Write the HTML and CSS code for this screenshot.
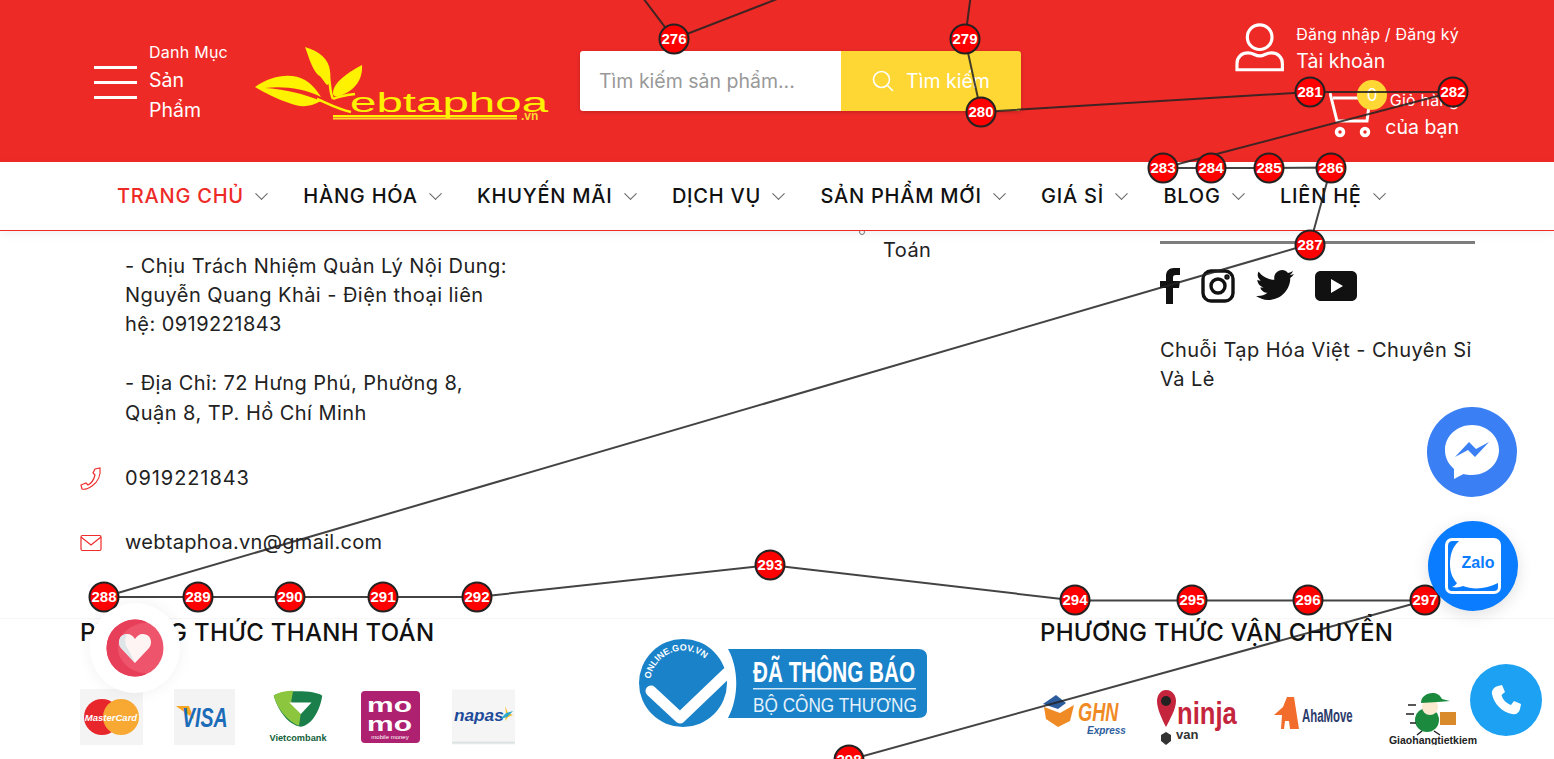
FILE: index.html
```html
<!DOCTYPE html>
<html lang="vi">
<head>
  <meta charset="UTF-8" />
  <meta name="viewport" content="width=device-width, initial-scale=1.0" />
  <title>Web Tạp Hóa</title>
  <link rel="stylesheet" href="styles.css">
</head>
<body>
<div class="page">

  <header class="top">
    <div class="cat">
      <div class="burger"><span></span><span></span><span></span></div>
      <div class="cat-text">
        <small>Danh Mục</small>
        <p>Sản<br>Phẩm</p>
      </div>
    </div>

    <svg class="logo" width="296" height="80" viewBox="0 0 296 80">
      <path fill="#fff200" d="M0 40C18 27 38 26 50 33C58 38 63 45 66 50C48 41 28 39 10 41C28 42 50 47 66 54C54 61 44 60 34 56C22 52 10 46 0 40Z"/>
      <path fill="#fff200" d="M50 0C64 4 74 12 75 24C76 32 75 37 72 38C68 34 67 30 63 28C56 20 54 10 50 0Z"/>
      <path fill="#fff200" d="M107 18C108 32 100 44 84 49C80 50 78 49 78 46C78 36 92 26 107 18Z"/>
      <path fill="none" stroke="#fff200" stroke-width="2.5" d="M72 24C76 34 74 44 78 52M62 52C72 56 82 62 96 65M78 52C82 50 92 48 100 47"/>
      <rect x="78" y="68" width="184" height="2" fill="#fff200"/>
      <rect x="78" y="70.500" width="184" height="2" fill="#ffd92e"/>
      <text class="logo-word" transform="translate(95 65) scale(1.76 1)">ebtaphoa</text>
      <text class="logo-vn" x="266" y="73">.vn</text>
    </svg>

    <form class="search">
      <input class="search-input" type="text" placeholder="Tìm kiếm sản phẩm..." />
      <button class="search-btn" type="button">
        <svg width="22" height="22" viewBox="0 0 22 22" fill="none" stroke="#fff" stroke-width="1.6"><circle cx="9.500" cy="9.500" r="8"/><path d="M15.500 15.500L21 21"/></svg>
        Tìm kiếm
      </button>
    </form>

    <div class="acct-wrap">
      <div class="acct">
        <svg width="50" height="50" viewBox="0 0 50 50" fill="none" stroke="#fff" stroke-width="3.2"><circle cx="25" cy="14" r="12.500"/><path d="M2 47V41C2 34 7 30 13 30C19 30 20 33 25 33C30 33 31 30 37 30C43 30 48 34 48 41V47Z"/></svg>
        <div class="acct-text">
          <small>Đăng nhập / Đăng ký</small>
          <b>Tài khoản</b>
        </div>
      </div>
      <div class="cart">
        <div class="cart-icon">
          <svg width="44" height="46" viewBox="0 0 44 46" fill="none" stroke="#fff" stroke-width="3"><path d="M1 1L8 29H38L41 6H4"/><circle cx="11" cy="40" r="3.500" stroke-width="3.500"/><circle cx="36" cy="40" r="3.500" stroke-width="3.500"/></svg>
          <span class="badge">0</span>
        </div>
        <div class="cart-text">
          <small>Giỏ hàng</small>
          <b>của bạn</b>
        </div>
      </div>
    </div>
  </header>

  <nav class="menu">
    <a class="active" href="#">Trang chủ <i class="chev"></i></a>
    <a href="#">Hàng hóa <i class="chev"></i></a>
    <a href="#">Khuyến mãi <i class="chev"></i></a>
    <a href="#">Dịch vụ <i class="chev"></i></a>
    <a href="#">Sản phẩm mới <i class="chev"></i></a>
    <a href="#">Giá sỉ <i class="chev"></i></a>
    <a href="#">Blog <i class="chev"></i></a>
    <a href="#">Liên hệ <i class="chev"></i></a>
  </nav>

  <section class="info">
    <div class="col-contact">
      <p class="contact-text">- Chịu Trách Nhiệm Quản Lý Nội Dung: Nguyễn Quang Khải - Điện thoại liên hệ: 0919221843</p>
      <p class="contact-text gap">- Địa Chỉ: 72 Hưng Phú, Phường 8, Quận 8, TP. Hồ Chí Minh</p>
      <div class="contact-row first">
        <svg width="22" height="24" viewBox="0 0 22 24" fill="none" stroke="#ef2b2b" stroke-width="1.2"><path d="M15 2L20 1C21 8 18 15 12 19C9 21 5 23 2 22L1 18L6 16L8 18C12 16 14 12 15 8L13 6Z"/></svg>
        <span class="phone-no">0919221843</span>
      </div>
      <div class="contact-row">
        <svg width="22" height="18" viewBox="0 0 22 18" fill="none" stroke="#ef2b2b" stroke-width="1.2"><rect x="1" y="1.500" width="20" height="15" rx="1.500"/><path d="M1 3L11 11L21 3"/></svg>
        <span class="mail">webtaphoa.vn@gmail.com</span>
      </div>
    </div>

    <div class="col-mid">
      <i class="bullet"></i>
      <span>Toán</span>
    </div>

    <div class="col-social">
      <hr class="rule">
      <div class="social">
        <svg width="20" height="36" viewBox="0 0 20 36"><path fill="#111" d="M6 36V20H0V13H6V8C6 3 9 0 14 0H20V7H16C13.500 7 13 8 13 10V13H20L19 20H13V36Z"/></svg>
        <svg width="34" height="34" viewBox="0 0 34 34" fill="none" stroke="#111" stroke-width="3.400"><rect x="2" y="2" width="30" height="30" rx="8"/><circle cx="17" cy="17" r="7"/><circle cx="26" cy="8" r="1" fill="#111"/></svg>
        <svg width="38" height="32" viewBox="0 0 38 32"><path fill="#111" d="M38 4C36.500 4.700 35 5 33.500 5.200C35 4.300 36.300 2.800 37 1C35.500 1.900 33.800 2.500 32 2.900C30.500 1.100 28.500 0 26.200 0C21 0 17.300 4.800 18.400 9.800C11.800 9.500 6 6.300 2.600 1.400C.8 4.500 1.700 8.500 4.800 10.600C3.600 10.600 2.400 10.200 1.400 9.700C1.400 13.500 4 16.500 7.600 17.300C6.500 17.600 5.300 17.600 4.200 17.400C5.200 20.500 8 22.700 11.500 22.800C8.200 25.400 4.200 26.500 0 26C3.500 28.300 7.600 30 12 30C26.500 30 34.700 17.700 34.200 7.900C35.700 6.900 37 5.500 38 4Z"/></svg>
        <svg width="42" height="30" viewBox="0 0 42 30"><path fill="#111" d="M6 0H36C40 0 42 2.500 42 6V24C42 27.500 40 30 36 30H6C2 30 0 27.500 0 24V6C0 2.500 2 0 6 0Z"/><path fill="#fff" d="M16 8L28 15L16 22Z"/></svg>
      </div>
      <p class="slogan">Chuỗi Tạp Hóa Việt - Chuyên Sỉ Và Lẻ</p>
    </div>
  </section>

  <footer class="pay">
    <div class="pay-col">
      <h3>Phương thức thanh toán</h3>
      <div class="logos">
        <svg class="pay-logo" viewBox="0 0 63 56">
          <rect width="63" height="56" fill="#f4f4f4"/>
          <circle cx="22" cy="28" r="18" fill="#e8272c"/>
          <circle cx="41" cy="28" r="18" fill="#f7a933"/>
          <text class="mc" x="31" y="32" text-anchor="middle">MasterCard</text>
        </svg>
        <svg class="pay-logo" viewBox="0 0 61 56">
          <rect width="61" height="56" fill="#f3f3f3"/>
          <path fill="#f6a623" d="M2 17H15L20 30Z"/>
          <text class="visa" transform="translate(8 38) scale(.7 1)">VISA</text>
        </svg>
        <svg class="pay-logo" viewBox="0 0 65 56">
          <path fill="#1a7f4b" d="M8 6C16 0 50 0 58 6C56 20 48 36 36 38C22 36 12 20 8 6Z"/>
          <path fill="#8cc63f" d="M8 6C14 2 22 1 28 1L26 12L36 24L34 37C22 32 12 20 8 6Z"/>
          <path fill="#fff" d="M24 13H47L36 25Z"/>
          <text class="vcb" x="33" y="53" text-anchor="middle">Vietcombank</text>
        </svg>
        <svg class="pay-logo" viewBox="0 0 61 56">
          <rect x="1" y="2" width="59" height="52" rx="4" fill="#ae2070"/>
          <text class="momo" transform="translate(7 23) scale(1.500 1)">mo</text>
          <text class="momo" transform="translate(7 42) scale(1.500 1)">mo</text>
          <text class="momo-sub" x="30" y="50" text-anchor="middle">mobile money</text>
        </svg>
        <svg class="pay-logo" viewBox="0 0 64 56">
          <rect width="64" height="56" fill="#f5f5f5"/>
          <text class="napas" x="2" y="32">napas</text>
          <path fill="#f6c02c" d="M54 17L57 24L62 26L57 28L54 32L55 26Z"/>
          <path fill="#2aa7c9" d="M49 30L55 24L62 22L56 28Z"/>
          <rect y="53" width="64" height="2" fill="#dde2e2"/>
        </svg>
      </div>
    </div>

    <svg class="gov" width="290" height="90" viewBox="0 0 290 90">
      <circle cx="44" cy="44" r="44" fill="#1a82c9"/>
      <path fill="#1a82c9" d="M89 10H279C285 10 288 13 288 18V71C288 76 285 79 279 79H89C100 58 100 30 89 10Z"/>
      <path fill="none" stroke="#fff" stroke-width="11" stroke-linejoin="round" stroke-linecap="round" d="M12 52L41 79L88 34"/>
      <defs><path id="gov-arc" d="M11.500 40A33 33 0 0 1 70 24"/></defs>
      <text class="gov-arc"><textPath href="#gov-arc">ONLINE.GOV.VN</textPath></text>
      <text class="gov-big" transform="translate(114 43) scale(.69 1)">ĐÃ THÔNG BÁO</text>
      <rect x="114" y="49" width="163" height="1.500" fill="#cfe6f5"/>
      <text class="gov-small" transform="translate(114 73) scale(.82 1)">BỘ CÔNG THƯƠNG</text>
    </svg>

    <div class="pay-col ship">
      <h3>Phương thức vận chuyển</h3>
      <div class="logos">
        <svg class="ship-logo" viewBox="0 0 90 56">
          <path fill="#f08a24" d="M4 18L20 24L34 16L30 32L18 38L6 30Z"/>
          <path fill="#2c5c9c" d="M3 15L16 6L26 14L18 20Z"/>
          <text class="ghn" transform="translate(38 32) scale(.7 1)">GHN</text>
          <text class="ghn-sub" x="47" y="45">Express</text>
        </svg>
        <svg class="ship-logo" viewBox="0 0 90 56">
          <path fill="#c4243c" d="M10 1C17 1 20 7 20 12C20 20 14 30 10 38C6 30 1 20 1 12C1 7 4 1 10 1Z"/>
          <circle cx="10" cy="12" r="5" fill="#222"/>
          <path fill="#333" d="M5 46L10 43L15 46V52L10 56L5 52Z"/>
          <text class="ninja" transform="translate(21 35) scale(.8 1)">ninja</text>
          <text class="ninja-sub" x="20" y="50">van</text>
        </svg>
        <svg class="ship-logo" viewBox="0 0 90 56">
          <path fill="#f26c2b" d="M9 40L10 26L2 26L11 18L15 8H22L27 40H18L17 32L13 32L12 40Z"/>
          <text class="aha" transform="translate(30 33) scale(.6 1)">AhaMove</text>
        </svg>
        <svg class="ship-logo" viewBox="0 0 90 56">
          <circle cx="39" cy="31" r="12" fill="#1b8a3e"/>
          <circle cx="42" cy="18" r="8" fill="#fbe9d0"/>
          <path fill="#1b8a3e" d="M33 14C33 3 50 0 54 10L62 12L50 13Z"/>
          <rect x="52" y="23" width="16" height="13" fill="#d98a2b"/>
          <path fill="none" stroke="#222" stroke-width="1.500" d="M34 42L29 46M46 42L52 46M20 16H28M18 25H26M22 34H28"/>
          <text class="ghtk" x="45" y="55" text-anchor="middle">Giaohangtietkiem</text>
        </svg>
      </div>
    </div>
  </footer>

  <!-- numbered path drawn over the page -->
  <svg class="trace" width="1554" height="759" viewBox="0 0 1554 759">
    <path d="M640 -6L674 39L790 -6"/>
    <path d="M971 -6L965 39L981 112L1310 92L1453 92L1163 168L1211 168L1269 168L1331 167.500L1310 244L104 597L198 597L290 597L383 597L477 597L770 565L1075 600.500L1192 600.500L1308 600.500L1425 600.500L849 760"/>
    <g class="nodes">
      <circle cx="674" cy="39" r="14.500"/><text x="674" y="44">276</text>
      <circle cx="965" cy="39" r="14.500"/><text x="965" y="44">279</text>
      <circle cx="981" cy="112" r="14.500"/><text x="981" y="117">280</text>
      <circle cx="1310" cy="92" r="14.500"/><text x="1310" y="97">281</text>
      <circle cx="1453" cy="92" r="14.500"/><text x="1453" y="97">282</text>
      <circle cx="1163" cy="168" r="14.500"/><text x="1163" y="173">283</text>
      <circle cx="1211" cy="168" r="14.500"/><text x="1211" y="173">284</text>
      <circle cx="1269" cy="168" r="14.500"/><text x="1269" y="173">285</text>
      <circle cx="1331" cy="168" r="14.500"/><text x="1331" y="173">286</text>
      <circle cx="1310" cy="245" r="14.500"/><text x="1310" y="250">287</text>
      <circle cx="104" cy="597" r="14.500"/><text x="104" y="602">288</text>
      <circle cx="198" cy="597" r="14.500"/><text x="198" y="602">289</text>
      <circle cx="290" cy="597" r="14.500"/><text x="290" y="602">290</text>
      <circle cx="383" cy="597" r="14.500"/><text x="383" y="602">291</text>
      <circle cx="477" cy="597" r="14.500"/><text x="477" y="602">292</text>
      <circle cx="770" cy="565" r="14.500"/><text x="770" y="570">293</text>
      <circle cx="1075" cy="600" r="14.500"/><text x="1075" y="605">294</text>
      <circle cx="1192" cy="600" r="14.500"/><text x="1192" y="605">295</text>
      <circle cx="1308" cy="600" r="14.500"/><text x="1308" y="605">296</text>
      <circle cx="1425" cy="600" r="14.500"/><text x="1425" y="605">297</text>
      <circle cx="849" cy="760" r="14.500"/><text x="849" y="765">298</text>
    </g>
  </svg>

  <a class="fab fab-heart" href="#">
    <svg width="58" height="58" viewBox="0 0 58 58">
      <circle cx="29" cy="29" r="28.500" fill="#ee556d"/>
      <path fill="#e73f5a" d="M29 .5A28.500 28.500 0 0 0 29 57.500C34 57.500 38 56.500 41 54.500C26 54 12 43 12 29C12 15 26 4 41 3.500C38 1.500 34 .5 29 .5Z"/>
      <path fill="#fdf4f3" d="M29 44L15 29C11 24 13 15 21 15C25 15 27 17 29 20C31 17 33 15 37 15C45 15 47 24 43 29Z"/>
      <path fill="#dfe6ea" d="M29 44L15 29C11 24 13 15 21 15C18 20 19 26 22 30Z"/>
    </svg>
  </a>
  <a class="fab fab-msg" href="#">
    <svg width="54" height="54" viewBox="0 0 54 54">
      <path fill="#fff" d="M27 0C12 0 0 11 0 25C0 33 3.500 39 9 44V54L18.500 49C21 49.800 24 50 27 50C42 50 54 39 54 25C54 11 42 0 27 0Z"/>
      <path fill="#3b7ff5" d="M10 32L24 17L31 24L44 17L30 32L23 25Z"/>
    </svg>
  </a>
  <a class="fab fab-zalo" href="#">
    <svg width="56" height="56" viewBox="0 0 56 56">
      <rect width="56" height="56" rx="7" fill="#fff"/>
      <path fill="#0a7cff" d="M3 8Q3 3 8 3H14C7 9 5 18 5 26C5 35 8 41 12 45C11 47 9 48 7 49C12 50 15 49 18 48C28 52 42 51 53 45V49Q53 53 49 53H7Q3 53 3 49Z"/>
      <text class="zalo-word" x="33" y="30" text-anchor="middle">Zalo</text>
    </svg>
  </a>
  <a class="fab fab-phone" href="#">
    <svg width="30" height="30" viewBox="0 0 30 30"><path fill="#fff" d="M7 1L11 0L14 7L10.500 10C12 15 15 18 20 20L23 16L30 19L29 24C28 28 25 30 21 29C11 27 3 19 1 9C0.500 5 3 2 7 1Z"/></svg>
  </a>
</div>
</body>
</html>
```

FILE: styles.css
```css
* {
  box-sizing: border-box;
}
html, body {
  margin: 0;
  padding: 0;
  overflow: hidden;
}
body {
  font-family: Inter, "Noto Sans", sans-serif;
  color: #222;
  background: #fff;
}
.page {
  position: relative;
  width: 1554px;
  height: 759px;
  overflow: hidden;
}

/* red header */
.top {
  height: 162px;
  background: #ee2a27;
  color: #fff;
  display: flex;
  align-items: flex-start;
  padding-left: 94px;
}
.cat {
  display: flex;
  align-items: flex-start;
  gap: 12px;
  width: 161px;
  padding-top: 41px;
}
.burger {
  width: 43px;
  margin-top: 24.5px;
  display: flex;
  flex-direction: column;
  gap: 12px;
}
.burger span {
  height: 3px;
  background: #fff;
}
.cat-text small {
  display: block;
  font-size: 16px;
  line-height: 22px;
  letter-spacing: 0.25px;
}
.cat-text p {
  margin: 2px 0 0;
  font-size: 19.5px;
  line-height: 30px;
}
.logo {
  margin-top: 47px;
}
.search {
  display: flex;
  margin: 51px 0 0 29px;
  width: 441px;
  height: 60px;
  border-radius: 3px;
  overflow: hidden;
  box-shadow: 0 1px 4px rgba(0,0,0,0.2);
}
.search-input {
  width: 261px;
  border: 0;
  outline: 0;
  padding: 0 19px;
  font: 19.5px Inter, sans-serif;
}
.search-input::placeholder {
  color: #999;
}
.search-btn {
  flex: 1;
  border: 0;
  background: #fed734;
  color: #fff;
  font: 19.5px Inter, sans-serif;
  display: flex;
  align-items: center;
  justify-content: center;
  gap: 12px;
}
.acct-wrap {
  margin-left: 214px;
  width: 224px;
  white-space: nowrap;
}
.acct {
  display: flex;
  gap: 12px;
  padding-top: 23px;
}
.acct-text small, .cart-text small {
  display: block;
  font-size: 16px;
  line-height: 22px;
  letter-spacing: 0.2px;
  margin-bottom: 1px;
}
.acct-text b, .cart-text b {
  display: block;
  font-weight: 400;
  font-size: 19.5px;
  line-height: 30px;
}
.cart {
  display: flex;
  justify-content: space-between;
  margin-top: 8px;
  padding-left: 94px;
}
.cart-icon {
  position: relative;
  margin-top: 8px;
}
.badge {
  position: absolute;
  left: 28px;
  top: -12px;
  width: 30px;
  height: 30px;
  border-radius: 50%;
  background: #fed734;
  color: #fff;
  font-size: 17px;
  line-height: 30px;
  text-align: center;
}
.cart-text {
  text-align: right;
  margin-top: 5px;
}

/* nav */
.menu {
  position: relative;
  z-index: 2;
  height: 69px;
  background: #fff;
  border-bottom: 1px solid #ee2a27;
  box-shadow: 0 3px 10px rgba(0,0,0,0.06);
  display: flex;
  align-items: center;
  gap: 35.4px;
  padding-left: 117px;
}
.menu a {
  display: flex;
  align-items: center;
  gap: 13px;
  color: #111;
  text-decoration: none;
  text-transform: uppercase;
  font-size: 20px;
  font-weight: 500;
  letter-spacing: 0.77px;
}
.menu a.active {
  color: #ee2a27;
}
.chev {
  width: 9px;
  height: 9px;
  margin-right: 2px;
  border-right: 1px solid #666;
  border-bottom: 1px solid #666;
  transform: rotate(45deg) translate(-2px, -2px);
}

/* middle block */
.info {
  height: 387px;
  display: flex;
  font-size: 20px;
  line-height: 29.4px;
  letter-spacing: 0.45px;
}
.col-contact {
  width: 883px;
  padding: 20.6px 0 0 80px;
}
.contact-text {
  margin: 0 0 0 45px;
  width: 385px;
}
.contact-text.gap {
  margin-top: 29.4px;
}
.contact-row {
  display: flex;
  align-items: center;
  gap: 23px;
  margin-top: 35px;
}
.contact-row.first {
  margin-top: 36px;
}
.contact-row svg {
  width: 22px;
}
.phone-no {
  letter-spacing: 0.9px;
}
.mail {
  letter-spacing: 0.3px;
}
.col-mid {
  width: 277px;
  margin-top: 5px;
  position: relative;
}
.bullet {
  position: absolute;
  left: -24px;
  top: -7px;
  width: 6px;
  height: 6px;
  border: 1px solid #777;
  border-radius: 50%;
}
.col-social {
  width: 315px;
  padding-top: 10px;
}
.rule {
  margin: 0;
  border: 0;
  height: 3px;
  background: #7d7d7d;
}
.social {
  display: flex;
  align-items: center;
  gap: 21px;
  margin-top: 24px;
}
.slogan {
  margin: 32px 0 0;
}

/* payment / shipping */
.pay {
  height: 141px;
  border-top: 1px solid #f6f6f6;
  display: flex;
  padding: 1px 0 0 80px;
}
.pay-col h3 {
  margin: 0;
  font-size: 24px;
  line-height: 26px;
  font-weight: 500;
  letter-spacing: 0.3px;
  color: #111;
  text-transform: uppercase;
  white-space: nowrap;
}
.logos {
  display: flex;
  margin-top: 43px;
}
.pay-logo {
  width: 63px;
  height: 56px;
  margin-right: 30px;
}
.ship-logo {
  width: 90px;
  height: 56px;
  margin-right: 26px;
}
.gov {
  margin: 19px 0 0 94px;
}
.ship {
  margin-left: 111px;
}

/* logo texts */
.logo-word {
  font-family: "Liberation Sans", sans-serif;
  font-size: 27px;
  fill: #fff200;
}
.logo-vn {
  font-family: "Liberation Sans", sans-serif;
  font-size: 12px;
  font-weight: 700;
  fill: #ffd92e;
}
.mc {
  font: italic 700 9.5px "Liberation Sans", sans-serif;
  fill: #fff;
}
.visa {
  font: italic 700 28px "Liberation Sans", sans-serif;
  fill: #1b6bb8;
}
.vcb {
  font: 700 9.5px "Liberation Sans", sans-serif;
  fill: #14603a;
}
.momo {
  font: 700 20px "Liberation Sans", sans-serif;
  fill: #fff;
}
.momo-sub {
  font: 6px "Liberation Sans", sans-serif;
  fill: #fff;
}
.napas {
  font: italic 700 17.5px "Liberation Sans", sans-serif;
  fill: #1d4b9a;
}
.ghn {
  font: italic 700 26px "Liberation Sans", sans-serif;
  fill: #f08a24;
}
.ghn-sub {
  font: italic 700 10px "Liberation Sans", sans-serif;
  fill: #2c5c9c;
}
.ninja {
  font: 700 32px "Liberation Sans", sans-serif;
  fill: #c4243c;
}
.ninja-sub {
  font: 700 13px "Liberation Sans", sans-serif;
  fill: #333;
}
.aha {
  font: 700 19px "Liberation Sans", sans-serif;
  fill: #2b3a6b;
}
.ghtk {
  font: 700 10.5px "Liberation Sans", sans-serif;
  fill: #222;
}
.gov-arc {
  font: 700 9px "Liberation Sans", sans-serif;
  fill: #fff;
}
.gov-big {
  font: 700 30px "Liberation Sans", sans-serif;
  fill: #fff;
}
.gov-small {
  font: 21px "Liberation Sans", sans-serif;
  fill: #e4f1fa;
}
.zalo-word {
  font: 700 16px "Liberation Sans", sans-serif;
  fill: #0a7cff;
}

/* numbered overlay */
.trace {
  position: absolute;
  left: 0;
  top: 0;
  z-index: 3;
  pointer-events: none;
}
.trace path {
  fill: none;
  stroke: #222;
  stroke-width: 2;
  opacity: 0.85;
}
.nodes circle {
  fill: #f00;
  stroke: #222;
  stroke-width: 2;
}
.nodes text {
  font: 700 15px "Liberation Sans", sans-serif;
  fill: #fff;
  text-anchor: middle;
}

/* floating buttons */
.fab {
  position: absolute;
  z-index: 4;
  display: flex;
  align-items: center;
  justify-content: center;
  border-radius: 50%;
}
.fab-heart {
  left: 90px;
  top: 603px;
  width: 90px;
  height: 90px;
  background: #fff;
  box-shadow: 0 0 16px rgba(0,0,0,0.06);
}
.fab-msg {
  left: 1427px;
  top: 407px;
  width: 90px;
  height: 90px;
  background: #3b7ff5;
}
.fab-zalo {
  left: 1428px;
  top: 521px;
  width: 90px;
  height: 90px;
  background: #0a7cff;
  box-shadow: 0 4px 16px rgba(0,0,0,0.12);
}
.fab-phone {
  left: 1470px;
  top: 664px;
  width: 72px;
  height: 72px;
  background: #1da1f2;
}
```
